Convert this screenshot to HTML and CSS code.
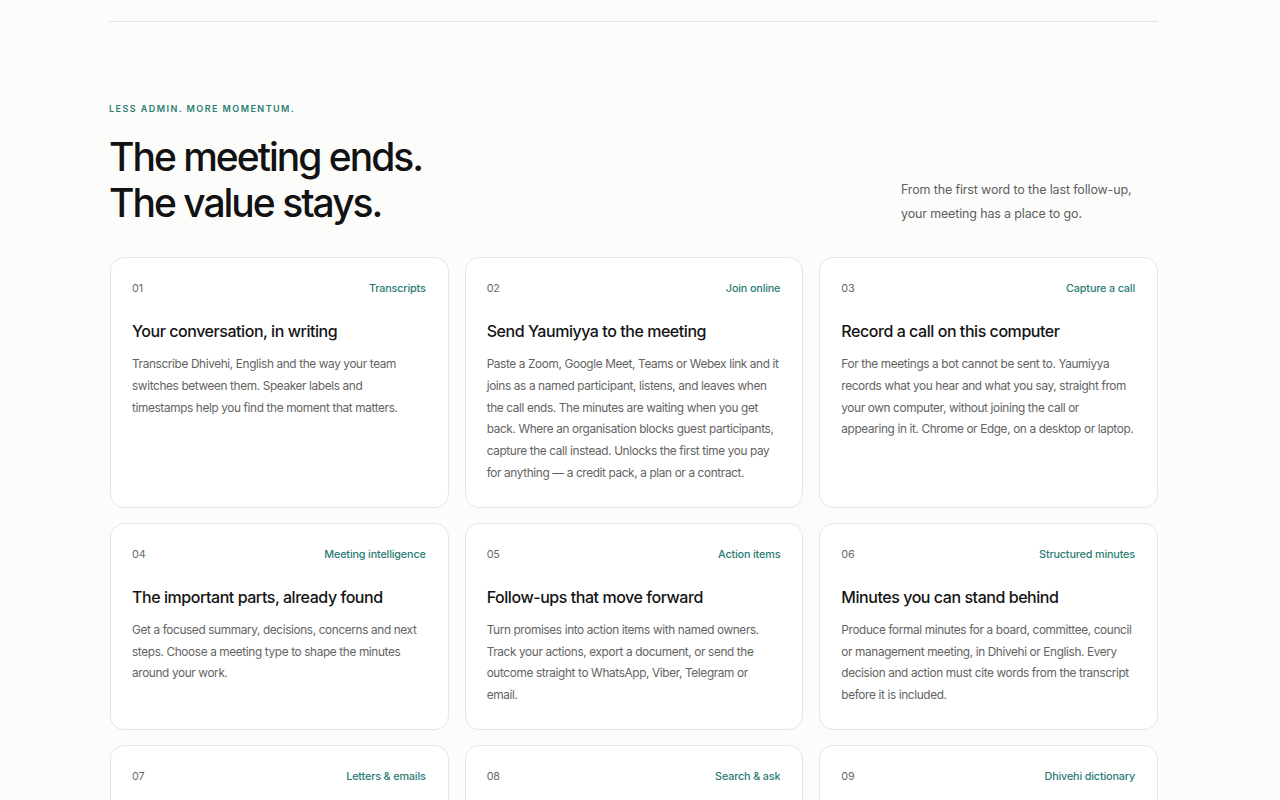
FILE: index.html
```html
<!DOCTYPE html>
<html lang="en">
<head>
<meta charset="utf-8">
<title>Yaumiyya — Features</title>
<link rel="stylesheet" href="styles.css">
</head>
<body>
<div class="wrap">
  <section class="features">
    <div class="head">
      <div class="head-left">
        <p class="eyebrow">Less admin. More momentum.</p>
        <h2 class="title">The meeting ends.<br>The value stays.</h2>
      </div>
      <p class="lede">From the first word to the last follow-up, your meeting has a place to go.</p>
    </div>
    <div class="grid">
      <article class="card">
        <div class="card-top"><span class="num">01</span><span class="tag">Transcripts</span></div>
        <h3>Your conversation, in writing</h3>
        <p>Transcribe Dhivehi, English and the way your team switches between them. Speaker labels and timestamps help you find the moment that matters.</p>
      </article>
      <article class="card">
        <div class="card-top"><span class="num">02</span><span class="tag">Join online</span></div>
        <h3>Send Yaumiyya to the meeting</h3>
        <p>Paste a Zoom, Google Meet, Teams or Webex link and it joins as a named participant, listens, and leaves when the call ends. The minutes are waiting when you get back. Where an organisation blocks guest participants, capture the call instead. Unlocks the first time you pay for anything — a credit pack, a plan or a contract.</p>
      </article>
      <article class="card">
        <div class="card-top"><span class="num">03</span><span class="tag">Capture a call</span></div>
        <h3>Record a call on this computer</h3>
        <p>For the meetings a bot cannot be sent to. Yaumiyya records what you hear and what you say, straight from your own computer, without joining the call or appearing in it. Chrome or Edge, on a desktop or laptop.</p>
      </article>
      <article class="card">
        <div class="card-top"><span class="num">04</span><span class="tag">Meeting intelligence</span></div>
        <h3>The important parts, already found</h3>
        <p>Get a focused summary, decisions, concerns and next steps. Choose a meeting type to shape the minutes around your work.</p>
      </article>
      <article class="card">
        <div class="card-top"><span class="num">05</span><span class="tag">Action items</span></div>
        <h3>Follow-ups that move forward</h3>
        <p>Turn promises into action items with named owners. Track your actions, export a document, or send the outcome straight to WhatsApp, Viber, Telegram or email.</p>
      </article>
      <article class="card">
        <div class="card-top"><span class="num">06</span><span class="tag">Structured minutes</span></div>
        <h3>Minutes you can stand behind</h3>
        <p>Produce formal minutes for a board, committee, council or management meeting, in Dhivehi or English. Every decision and action must cite words from the transcript before it is included.</p>
      </article>
      <article class="card">
        <div class="card-top"><span class="num">07</span><span class="tag">Letters &amp; emails</span></div>
        <h3>Write the follow-up letter</h3>
        <p>Draft letters and emails from what was said, ready to review and send.</p>
      </article>
      <article class="card">
        <div class="card-top"><span class="num">08</span><span class="tag">Search &amp; ask</span></div>
        <h3>Find anything that was said</h3>
        <p>Search across your meetings and ask questions in plain language.</p>
      </article>
      <article class="card">
        <div class="card-top"><span class="num">09</span><span class="tag">Dhivehi dictionary</span></div>
        <h3>Words your team uses</h3>
        <p>Teach Yaumiyya names, places and terms so they are spelled right.</p>
      </article>
    </div>
  </section>
</div>
</body>
</html>
```

FILE: styles.css
```css
* { box-sizing: border-box; }
html, body { margin: 0; padding: 0; }
body {
  background: #fcfcfa;
  font-family: Inter, "Noto Sans", "Liberation Sans", sans-serif;
  color: #141414;
}
.wrap {
  width: 1049px;
  margin-left: calc(50% - 531px);
  padding-top: 21px;
}
.features {
  border-top: 1px solid #e4e4e0;
  padding-top: 80px;
}
.head {
  display: flex;
  justify-content: space-between;
  align-items: flex-end;
}
.eyebrow {
  margin: 0;
  font-size: 9px;
  line-height: 14px;
  font-weight: 600;
  letter-spacing: 1.45px;
  text-transform: uppercase;
  color: #2a7c75;
}
.title {
  margin: 18px 0 0;
  font-size: 39px;
  line-height: 46px;
  font-weight: 500;
  letter-spacing: -2px;
  color: #121212;
}
.lede {
  margin: 0;
  width: 257px;
  font-size: 12.5px;
  line-height: 24px;
  letter-spacing: -0.15px;
  color: #5f5f5f;
}
.grid {
  margin-top: 31px;
  display: grid;
  grid-template-columns: repeat(3, 1fr);
  gap: 15px 16px;
  padding-left: 1px;
}
.card {
  background: #fff;
  border: 1px solid #e6e6e2;
  border-radius: 14px;
  padding: 23px 23px 22px 21px;
}
.card-top {
  display: flex;
  justify-content: space-between;
  align-items: center;
  font-size: 10.8px;
  line-height: 16px;
  letter-spacing: -0.15px;
  margin-right: -1px;
}
.num { color: #6a6a6a; }
.tag { color: #2a7c75; font-weight: 500; }
.card h3 {
  margin: 22px 0 0;
  font-size: 16px;
  line-height: 24px;
  font-weight: 500;
  letter-spacing: -0.45px;
  color: #141414;
}
.card p {
  margin: 11px 0 0;
  font-size: 11.8px;
  line-height: 21.8px;
  letter-spacing: -0.36px;
  color: #636363;
}
```
